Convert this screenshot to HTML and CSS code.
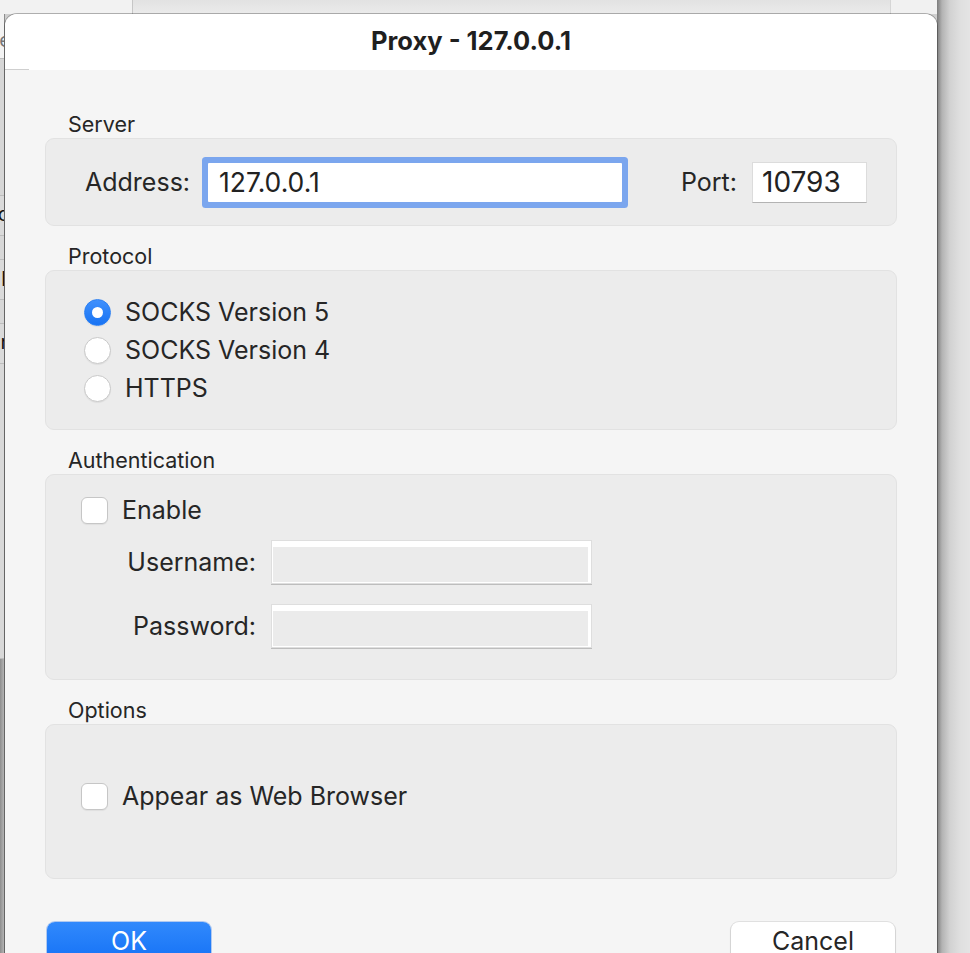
FILE: index.html
```html
<!DOCTYPE html>
<html lang="en">
<head>
<meta charset="utf-8">
<title>Proxy - 127.0.0.1</title>
<link rel="stylesheet" href="styles.css">
</head>
<body>
<div class="desk">
  <div class="bg-top">
    <div class="bt-a"></div>
    <div class="bt-b"></div>
    <div class="bt-c"></div>
  </div>
  <div class="bg-left">
    <div class="bl-row bl-1"><span>e</span></div>
    <div class="bl-row bl-2"></div>
    <div class="bl-row bl-3"><span>d</span></div>
    <div class="bl-row bl-4"></div>
    <div class="bl-row bl-5"><span>l</span></div>
    <div class="bl-row bl-6"></div>
    <div class="bl-row bl-7"><span>r</span></div>
    <div class="bl-row bl-8"></div>
    <div class="bl-row bl-9"></div>
  </div>

  <div class="dialog">
    <div class="titlebar">Proxy - 127.0.0.1</div>
    <div class="content">
      <div class="sec-label">Server</div>
      <div class="box server-box">
        <span class="field-label">Address:</span>
        <div class="addr-input">127.0.0.1</div>
        <span class="field-label port-label">Port:</span>
        <div class="port-input">10793</div>
      </div>

      <div class="sec-label">Protocol</div>
      <div class="box protocol-box">
        <div class="opt-row"><span class="radio on"></span><span class="opt-text">SOCKS Version 5</span></div>
        <div class="opt-row"><span class="radio"></span><span class="opt-text">SOCKS Version 4</span></div>
        <div class="opt-row"><span class="radio"></span><span class="opt-text">HTTPS</span></div>
      </div>

      <div class="sec-label">Authentication</div>
      <div class="box auth-box">
        <div class="check-row"><span class="checkbox"></span><span class="opt-text">Enable</span></div>
        <div class="cred-row user-row"><span class="field-label cred-label">Username:</span><div class="cred-input"></div></div>
        <div class="cred-row pass-row"><span class="field-label cred-label">Password:</span><div class="cred-input"></div></div>
      </div>

      <div class="sec-label">Options</div>
      <div class="box options-box">
        <div class="check-row"><span class="checkbox"></span><span class="opt-text">Appear as Web Browser</span></div>
      </div>

      <div class="buttons">
        <div class="btn btn-ok">OK</div>
        <div class="btn btn-cancel">Cancel</div>
      </div>
    </div>
  </div>
</div>
</body>
</html>
```
FILE: styles.css
```css
* { box-sizing: border-box; }
html, body { margin: 0; padding: 0; }
body {
  width: 970px;
  height: 953px;
  overflow: hidden;
  font-family: Inter, "Noto Sans", "Liberation Sans", sans-serif;
  color: #262626;
  background: #e4e4e4;
}
.desk {
  position: relative;
  width: 970px;
  height: 953px;
  overflow: hidden;
  padding: 14px 0 0 5px;
  background: linear-gradient(to right, #cfcfcf 0, #cfcfcf 937px, #7c7c7c 937px, #b3b3b3 942px, #d2d2d2 950px, #dfdfdf 960px, #e4e4e4 970px);
}

/* background windows */
.bg-top {
  position: absolute;
  top: 0;
  left: 0;
  width: 937px;
  height: 14px;
  display: flex;
}
.bt-a { width: 133px; background: #f2f2f2; border-right: 1px solid #c6c6c6; }
.bt-b { width: 758px; background: linear-gradient(#e2e2e2, #ebebeb); border-right: 1px solid #d6d6d6; }
.bt-c { flex: 1; background: #f1f1f1; }

.bg-left {
  position: absolute;
  top: 14px;
  left: 0;
  width: 5px;
  height: 939px;
  display: flex;
  flex-direction: column;
  background: #cfcfcf;
  border-right: 1px solid #8d8d8d;
  overflow: hidden;
}
.bl-row {
  position: relative;
  border-bottom: 1px solid #bdbdbd;
  font-size: 20px;
  line-height: 20px;
  color: #333;
}
.bl-row span { position: absolute; right: 0; }
.bl-1 { height: 45px; background: #f3f3f3; }
.bl-1 span { top: 16px; right: -7px; color: #777; }
.bl-2 { height: 137px; background: #d6d6d6; }
.bl-3 { height: 40px; background: #dadada; }
.bl-3 span { top: 8px; right: -6px; color: #111; }
.bl-4 { height: 24px; background: #d7d7d7; }
.bl-5 { height: 40px; background: #dadada; }
.bl-5 span { top: 9px; right: -2px; color: #111; }
.bl-6 { height: 24px; background: #d7d7d7; }
.bl-7 { height: 40px; background: #dadada; }
.bl-7 span { top: 8px; right: -4px; color: #111; }
.bl-8 { height: 295px; background: #d8d8d8; }
.bl-9 { flex: 1; background: linear-gradient(to right, #8e8e8e, #b4b4b4); border-bottom: none; }

/* dialog */
.dialog {
  position: relative;
  z-index: 1;
  width: 932px;
  height: 960px;
  background: #f5f5f5;
  border-radius: 12px 12px 0 0;
  box-shadow: 0 0 0 1px rgba(0, 0, 0, 0.28);
  overflow: hidden;
}
.titlebar {
  position: relative;
  height: 56px;
  background: #ffffff;
  display: flex;
  align-items: center;
  justify-content: center;
  font-size: 25.5px;
  font-weight: 700;
  color: #1f1f1f;
  padding-bottom: 3px;
}
.titlebar::before {
  content: "";
  position: absolute;
  left: 0;
  bottom: 0;
  width: 24px;
  height: 1px;
  background: #cfcfcf;
}
.content {
  padding: 42px 40px 0 40px;
}
.sec-label {
  font-size: 21.5px;
  line-height: 24px;
  padding-left: 23px;
  margin-bottom: 2px;
  color: #262626;
}
.box {
  background: #ececec;
  border: 1px solid #e2e2e2;
  border-radius: 9px;
  margin-bottom: 18px;
}
.field-label {
  font-size: 25px;
  line-height: 30px;
  color: #262626;
}

/* server */
.server-box {
  height: 88px;
  display: flex;
  align-items: center;
  padding: 0 29px 0 39px;
}
.addr-input {
  margin-left: 18px;
  width: 414px;
  height: 39px;
  background: #ffffff;
  border-radius: 1px;
  box-shadow: 0 0 0 6px #7ba6ee;
  padding-left: 11px;
  font-size: 26.5px;
  line-height: 39px;
  color: #222;
}
.port-label { margin-left: auto; }
.port-input {
  margin-left: 15px;
  width: 115px;
  height: 41px;
  background: #ffffff;
  border: 1px solid #dcdcdc;
  border-bottom-color: #b3b3b3;
  padding-left: 9px;
  font-size: 28px;
  line-height: 38px;
  color: #222;
}

/* protocol */
.protocol-box {
  padding: 22px 0 22px 38px;
}
.opt-row {
  height: 38px;
  display: flex;
  align-items: center;
  gap: 14px;
}
.opt-text {
  font-size: 25px;
  line-height: 30px;
  color: #262626;
}
.radio {
  width: 27px;
  height: 27px;
  border-radius: 50%;
  background: #ffffff;
  border: 1px solid #c9c9c9;
  box-shadow: 0 1px 1px rgba(0, 0, 0, 0.06);
  display: flex;
  align-items: center;
  justify-content: center;
}
.radio.on {
  background: linear-gradient(#3f90fd, #1873f3);
  border-color: #2a7ff3;
}
.radio.on::after {
  content: "";
  width: 11px;
  height: 11px;
  border-radius: 50%;
  background: #ffffff;
}

/* checkbox */
.check-row {
  height: 32px;
  display: flex;
  align-items: center;
  gap: 14px;
  padding-left: 35px;
}
.checkbox {
  width: 27px;
  height: 27px;
  border-radius: 6px;
  background: #ffffff;
  border: 1px solid #c6c6c6;
  box-shadow: 0 1px 1px rgba(0, 0, 0, 0.06);
}

/* auth */
.auth-box {
  height: 206px;
  padding-top: 19px;
}
.cred-row {
  display: grid;
  grid-template-columns: 210px 319px;
  column-gap: 16px;
  align-items: center;
  height: 42px;
}
.user-row { margin-top: 15px; }
.pass-row { margin-top: 22px; }
.cred-label { text-align: right; }
.cred-input {
  height: 42px;
  background: #ebebeb;
  border-style: solid;
  border-color: #ffffff;
  border-width: 6px 3px 1px 1px;
  box-shadow: 0 0 0 1px #dedede, 0 1px 0 1px #bdbdbd;
}

/* options */
.options-box {
  height: 155px;
  padding-top: 55px;
  margin-bottom: 43px;
}

/* buttons */
.buttons {
  display: flex;
  justify-content: space-between;
  padding: 0 2px;
}
.btn {
  width: 164px;
  height: 38px;
  border-radius: 8px;
  font-size: 25px;
  line-height: 38px;
  text-align: center;
}
.btn-ok {
  background: linear-gradient(#3189fc, #1673f6);
  color: #ffffff;
  box-shadow: 0 0 0 1px rgba(20, 100, 230, 0.3);
}
.btn-cancel {
  background: #ffffff;
  color: #262626;
  box-shadow: 0 0 0 1px rgba(0, 0, 0, 0.08), 0 1px 2px rgba(0, 0, 0, 0.2);
}
```
